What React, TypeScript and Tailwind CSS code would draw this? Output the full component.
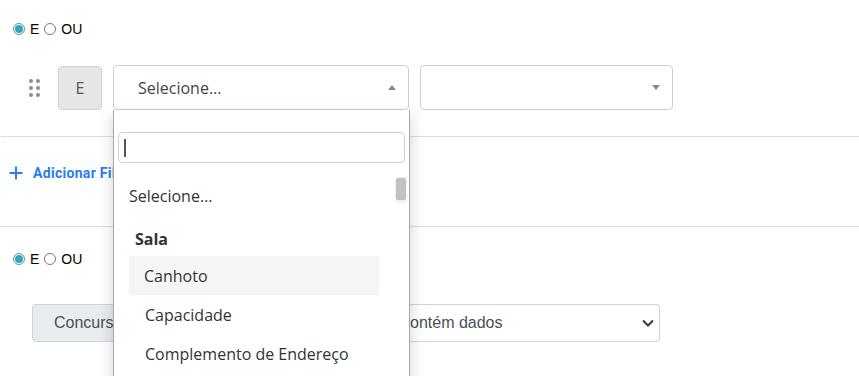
function Radio({ checked }: { checked?: boolean }) {
  return checked ? (
    <span className="flex h-[12px] w-[12px] items-center justify-center rounded-full border border-[#3f9fb3] bg-white">
      <span className="h-[8px] w-[8px] rounded-full bg-[#3f9fb3]" />
    </span>
  ) : (
    <span className="block h-[12px] w-[12px] rounded-full border border-[#7a7a7a] bg-white" />
  );
}

function AndOr() {
  return (
    <div className="flex h-[16px] items-center text-[14px] text-black [font-family:'Liberation_Sans',Arial,sans-serif]">
      <Radio checked />
      <span className="ml-[5px]">E</span>
      <span className="ml-[5px] block">
        <Radio />
      </span>
      <span className="ml-[5px]">OU</span>
    </div>
  );
}

function DragHandle() {
  return (
    <div className="grid w-fit grid-cols-2 gap-x-[3px] gap-y-[3px]">
      {[0, 1, 2, 3, 4, 5].map(i => (
        <span key={i} className="h-[4px] w-[4px] rounded-full bg-[#8a8f99]" />
      ))}
    </div>
  );
}

function Triangle({ up }: { up?: boolean }) {
  return (
    <svg width="8" height="5" viewBox="0 0 8 5" className="block">
      {up ? <path d="M0 5 L4 0 L8 5 Z" fill="#888" /> : <path d="M0 0 L8 0 L4 5 Z" fill="#888" />}
    </svg>
  );
}

export default function App() {
  const poppins = "[font-family:'Open_Sans','Noto_Sans',sans-serif]";
  return (
    <div className="relative h-[376px] w-[859px] overflow-hidden bg-white">
      {/* first filter group */}
      <div className="-ml-[4px] w-[900px] rounded-b-[7px] border-b border-[#dcdcdc] pb-[26px] pl-[17px] pt-[21px]">
        <AndOr />
        <div className={`mt-[28px] flex items-center ${poppins}`}>
          <div className="ml-[16px] w-[29px]">
            <DragHandle />
          </div>
          <div className="flex h-[44px] w-[44px] items-center justify-center rounded-[4px] border border-[#d2d2d2] bg-[#e6e6e6] text-[16px] text-[#555]">
            E
          </div>
          <div className="ml-[11px] flex h-[45px] w-[296px] items-center justify-between rounded-[4px] border border-[#cfcfcf] bg-white pl-[24px] pr-[12px] text-[16px] text-[#444]">
            <span>Selecione…</span>
            <Triangle up />
          </div>
          <div className="ml-[11px] flex h-[45px] w-[253px] items-center justify-end rounded-[4px] border border-[#cfcfcf] bg-white pr-[12px]">
            <Triangle />
          </div>
        </div>
      </div>

      {/* add filter */}
      <div className="flex h-[89px] items-start pl-[9px] pt-[27px] text-[#2b7de9] [font-family:Roboto,'Liberation_Sans',sans-serif]">
        <svg width="14" height="14" viewBox="0 0 14 14" className="mt-[2px] block">
          <path d="M7 0.5 V13.5 M0.5 7 H13.5" stroke="#2b7de9" strokeWidth="2" fill="none" />
        </svg>
        <span className="ml-[10px] text-[14px] font-bold leading-[18px] tracking-[0.3px]">Adicionar Filtro</span>
      </div>

      {/* second filter group */}
      <div className="-ml-[4px] w-[900px] rounded-t-[7px] border-t border-[#dcdcdc] pl-[17px] pt-[24px]">
        <AndOr />
        <div className="mt-[37px] flex items-center text-[16px] text-[#495057] [font-family:'Liberation_Sans',Arial,sans-serif]">
          <div className="ml-[19px] flex h-[38px] w-[170px] items-center rounded-l-[4px] border border-[#ced4da] bg-[#e9ecef] pl-[21px]">
            Concurso
          </div>
          <div className="h-[38px] w-[188px] border-y border-r border-[#ced4da] bg-white" />
          <div className="flex h-[38px] w-[270px] items-center justify-between rounded-r-[4px] border-y border-r border-[#ced4da] bg-white pl-[12px] pr-[5px]">
            <span>contém dados</span>
            <svg width="12" height="8" viewBox="0 0 12 8" className="block">
              <path d="M1 1.5 L6 6.5 L11 1.5" stroke="#343a40" strokeWidth="2" fill="none" />
            </svg>
          </div>
        </div>
      </div>

      {/* open dropdown */}
      <div
        className={`absolute left-[113px] top-[110px] h-[280px] w-[297px] border-x border-[#a9a9a9] bg-white shadow-[0_6px_14px_rgba(0,0,0,0.18)] ${poppins}`}
      >
        <div className="px-[4px] pt-[22px]">
          <div className="flex h-[31px] items-center rounded-[4px] border border-[#d0d0d0] pl-[5px]">
            <span className="h-[18px] w-[2px] bg-[#555]" />
          </div>
        </div>
        <div className="flex pt-[13px]">
          <div className="flex-1 pl-[4px] text-[16px] text-[#333]">
            <div className="flex h-[39px] items-center pl-[11px]">Selecione…</div>
            <div className="h-[41px] pl-[17px] pt-[13px] font-bold leading-[22px]">Sala</div>
            <div className="ml-[11px] flex h-[39px] w-[250px] items-center bg-[#f5f5f5] pl-[15px]">Canhoto</div>
            <div className="ml-[11px] flex h-[39px] w-[250px] items-center pl-[16px]">Capacidade</div>
            <div className="ml-[11px] flex h-[39px] w-[250px] items-center pl-[16px]">Complemento de Endereço</div>
          </div>
          <div className="mr-[2px] mt-[1px] h-[26px] w-[12px] rounded-[3px] bg-[#f1f1f1] p-[1px]">
            <div className="h-[22px] w-[10px] rounded-[2px] bg-[#c1c1c1]" />
          </div>
        </div>
      </div>
    </div>
  );
}
